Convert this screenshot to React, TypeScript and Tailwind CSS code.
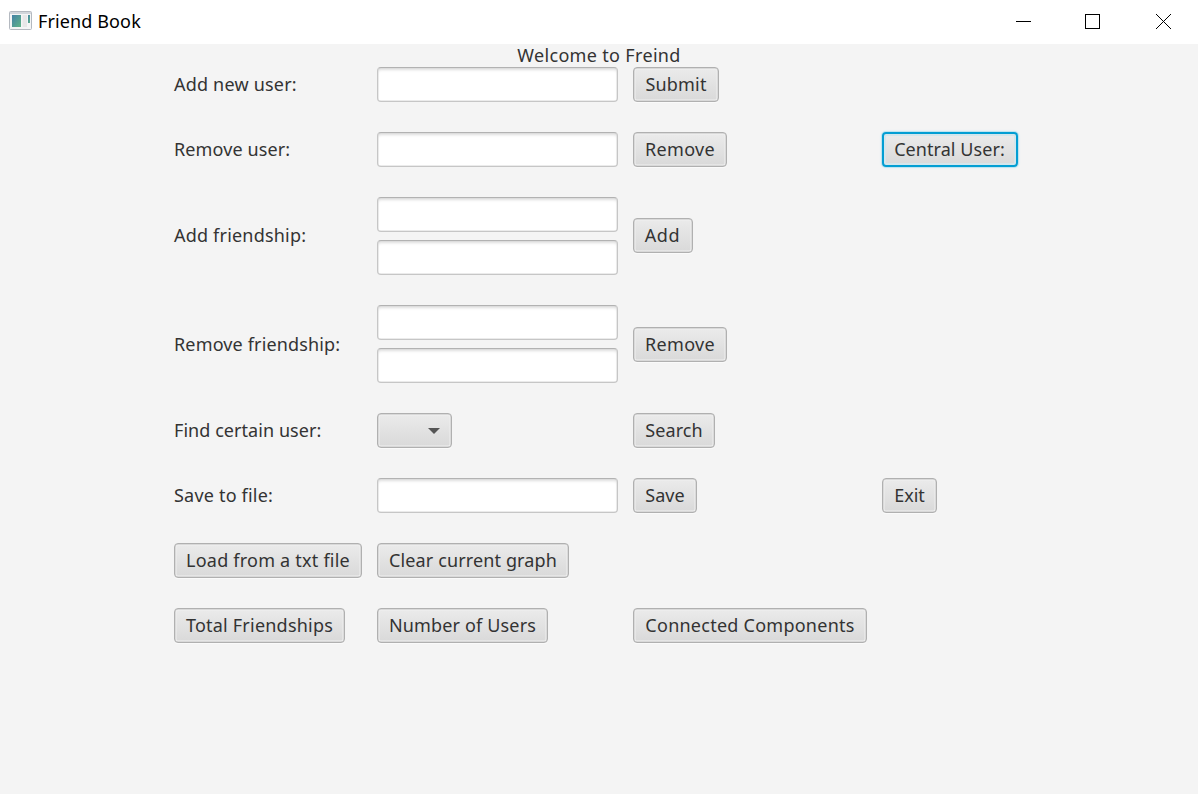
import React from "react";

const face =
  "box-border h-[35px] rounded-[4px] border border-[#b0b0b0] bg-linear-to-b from-[#ebebeb] to-[#d9d9d9] shadow-[inset_0_0_0_0.5px_#c4c4c4,inset_0_0_0_1.5px_#efefef,0_1px_0_#fafafa]";

const focusedFace =
  "box-border h-[35px] rounded-[4px] border-2 border-[#039ed3] bg-linear-to-b from-[#ebebeb] to-[#d9d9d9] shadow-[inset_0_0_0_2px_#d3e6ec,0_0_0_1px_#bfe4f0,0_0_2px_1px_#d5edf4]";

function Button({ label, className, focused = false }: { label: string; className: string; focused?: boolean }) {
  return (
    <button
      type="button"
      className={`${focused ? focusedFace : face} ${className} flex items-center justify-center whitespace-nowrap`}
    >
      <span>{label}</span>
    </button>
  );
}

function Field({ name }: { name: string }) {
  return (
    <input
      aria-label={name}
      className="block h-[35px] w-[241px] rounded-[4px] border border-[#c6c6c6] border-t-[#b2b2b2] bg-white px-3 shadow-[inset_0_0_0_0.5px_#d8d8d8,inset_0_3px_3px_-1px_#dedede] outline-none"
    />
  );
}

function Label({ children, className = "tracking-[0.2px]" }: { children: React.ReactNode; className?: string }) {
  return <span className={`whitespace-nowrap ${className}`}>{children}</span>;
}

export default function App() {
  return (
    <div className="flex h-[794px] w-[1198px] flex-col overflow-hidden bg-[#f4f4f4] font-['Noto_Sans','Open_Sans',sans-serif] text-[18px] leading-[23px] text-[#333333]">
      <header className="flex h-11 shrink-0 items-center bg-white text-black">
        <svg className="ml-[9px] mb-[3px] h-[19px] w-[23px]" viewBox="0 0 23 19">
          <defs>
            <linearGradient id="pane" x1="0" y1="0" x2="1" y2="1">
              <stop offset="0" stopColor="#4381a6" />
              <stop offset="1" stopColor="#60b488" />
            </linearGradient>
          </defs>
          <rect x="0.5" y="0.5" width="22" height="18" rx="1" fill="#f4f5f6" stroke="#b4b9c0" />
          <path d="M1 2h21" stroke="#d2d6dc" strokeWidth="2" />
          <rect x="3" y="4" width="9" height="12" fill="url(#pane)" />
          <rect x="13.5" y="4" width="4.5" height="12" fill="#e7e7e8" />
          <rect x="19" y="4" width="2" height="8" fill="url(#pane)" />
        </svg>
        <h1 className="ml-[6px] mb-[2px] whitespace-nowrap tracking-[0.12px]">Friend Book</h1>
        <div className="mb-[2px] ml-auto mr-[27px] flex items-center">
          <svg className="h-[15px] w-[15px]" viewBox="0 0 15 15" shapeRendering="crispEdges">
            <path d="M0 7.5h15" stroke="#000" />
          </svg>
          <svg className="ml-[54px] h-[15px] w-[15px]" viewBox="0 0 15 15" shapeRendering="crispEdges">
            <rect x="0.5" y="0.5" width="14" height="14" fill="none" stroke="#000" />
          </svg>
          <svg className="ml-[56px] h-[15px] w-[15px]" viewBox="0 0 15 15">
            <path d="M0 0l15 15M15 0L0 15" stroke="#000" />
          </svg>
        </div>
      </header>
      <h2 className="flex h-[23px] shrink-0 justify-center">
        <span className="tracking-[0.33px]">Welcome to Freind</span>
      </h2>
      <main className="ml-[174px] grid grid-cols-[188px_241px_234px_136px] grid-rows-[35px_35px_78px_78px_35px_35px_35px_35px] items-center gap-x-[15px] gap-y-[30px]">
        <Label>Add new user:</Label>
        <Field name="Add new user" />
        <Button label="Submit" className="w-[86px] tracking-[0.2px]" />
        <span />

        <Label className="tracking-[0.12px]">Remove user:</Label>
        <Field name="Remove user" />
        <Button label="Remove" className="w-[94px] tracking-[0.3px]" />
        <Button label="Central User:" className="w-[136px] pr-px tracking-[0.06px]" focused />

        <Label className="mb-[2px] tracking-[0.2px]">Add friendship:</Label>
        <div className="flex flex-col gap-2">
          <Field name="First user to add" />
          <Field name="Second user to add" />
        </div>
        <Button label="Add" className="mb-px w-[60px] pr-px tracking-[0.6px]" />
        <span />

        <Label className="tracking-[0.15px]">Remove friendship:</Label>
        <div className="flex flex-col gap-2">
          <Field name="First user to remove" />
          <Field name="Second user to remove" />
        </div>
        <Button label="Remove" className="w-[94px] tracking-[0.3px]" />
        <span />

        <Label className="tracking-[0.06px]">Find certain user:</Label>
        <button type="button" aria-label="User" className={`${face} flex w-[75px] items-center justify-end pr-[11px]`}>
          <svg className="h-[6px] w-[12px]" viewBox="0 0 12 6">
            <path d="M0 0h12L6 6z" fill="#555555" />
          </svg>
        </button>
        <Button label="Search" className="w-[82px] tracking-[0.1px]" />
        <span />

        <Label>Save to file:</Label>
        <Field name="Save to file" />
        <Button label="Save" className="w-[64px] tracking-[0.1px]" />
        <Button label="Exit" className="w-[55px]" />

        <Button label="Load from a txt file" className="w-[188px] tracking-[0.22px]" />
        <Button label="Clear current graph" className="w-[192px] tracking-[0.13px]" />
        <span />
        <span />

        <Button label="Total Friendships" className="w-[171px] tracking-[0.22px]" />
        <Button label="Number of Users" className="w-[171px] tracking-[0.16px]" />
        <Button label="Connected Components" className="w-[234px] tracking-[0.25px]" />
      </main>
    </div>
  );
}
